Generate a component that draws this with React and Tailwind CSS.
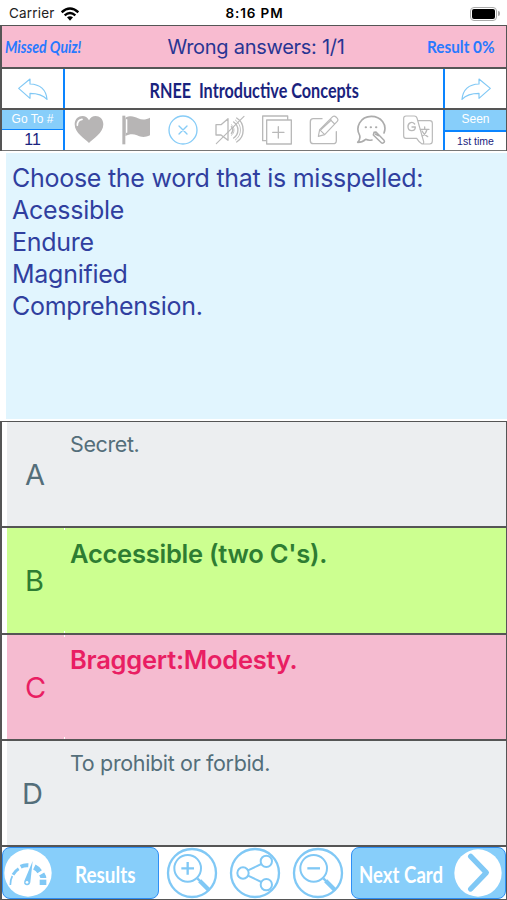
import React from 'react';

const answers = [
    { letter: 'A', text: 'Secret.', row: 'h-[106px] bg-[#eceef0] text-[#546e7a]', label: 'pl-[18px]', body: 'text-[21.5px] tracking-[-0.4px] pt-[7px]' },
    { letter: 'B', text: "Accessible (two C's).", row: 'h-[107px] bg-[#ccff90] text-[#2e7d32]', label: 'pl-[18px]', body: 'text-[25.5px] font-semibold tracking-[-0.25px] pt-[11px]', ticks: true },
    { letter: 'C', text: 'Braggert:Modesty.', row: 'h-[106px] bg-[#f5bbd0] text-[#e91e63]', label: 'pl-[18px]', body: 'text-[25.5px] font-semibold tracking-[-0.25px] pt-[10px]', ticks: true },
    { letter: 'D', text: 'To prohibit or forbid.', row: 'h-[106px] bg-[#eceef0] text-[#546e7a]', label: 'pl-[15px]', body: 'text-[21.5px] tracking-[-0.35px] pt-[7px]' },
];

const questionLines = [
    'Choose the word that is misspelled:',
    'Acessible',
    'Endure',
    'Magnified',
    'Comprehension.',
];

const ToolIcon = ({ children, color = '#b9b9b9' }) => (
    <svg viewBox="0 0 90 90" className="w-[30px] h-[30px]" fill="none" stroke={color} strokeWidth="4" strokeLinecap="round" strokeLinejoin="round">
        {children}
    </svg>
);

const ArrowIcon = ({ flip }) => (
    <svg viewBox="0 0 90 66" className={`w-[30px] h-[22px] ${flip ? '-scale-x-100' : ''}`} fill="none" stroke="#80c8f5" strokeWidth="3.5" strokeLinejoin="round">
        <path d="M2 31 36 3v15C64 19 84 34 87 64 73 49 58 46 36 46v15Z" />
    </svg>
);

const Toolbar = () => (
    <div className="flex-1 flex items-center justify-around pr-[1px]">
        <ToolIcon>
            <path d="M45 84C33 72 2 54 2 28 2 0 36-5 45 16 54-5 88 0 88 28 88 54 57 72 45 84Z" fill="#b7b5b5" stroke="none" />
            <path d="M10 31C10 20 16 14 24 13" stroke="#fff" strokeWidth="5" />
        </ToolIcon>
        <ToolIcon>
            <path d="M4 2H13V88H4Z" fill="#b7b5b5" stroke="none" />
            <path d="M13 8C28 0 40 4 51 10 64 16 76 14 87 8V61C70 69 60 66 48 61 36 56 26 57 13 63Z" fill="#b7b5b5" stroke="none" />
            <path d="M17 14V52" stroke="#fff" strokeWidth="4" />
        </ToolIcon>
        <ToolIcon color="#87ccf7">
            <circle cx="45" cy="45" r="42" />
            <path d="M33 33 57 57M57 33 33 57" />
        </ToolIcon>
        <ToolIcon>
            <path d="M3 29H18L39 11V76L18 60H3ZM49 35Q58 45 49 55M56 21C73 33 73 57 56 69M65 9C91 25 91 65 65 81" />
            <path d="M49 29C60 36 60 54 49 61M61 15C82 30 82 60 61 75" strokeWidth="2.5" />
            <path d="M4 86 87 4" strokeWidth="3.5" />
        </ToolIcon>
        <ToolIcon>
            <path d="M14 15H88V87H14ZM14 77H2V3H77V15M32 52H66M49 35V69" />
        </ToolIcon>
        <ToolIcon>
            <path d="M39 11H13Q4 11 4 20V77Q4 86 13 86H72Q82 86 82 77V50" />
            <path d="M28 64 32 44 71 5Q76 1 81 6L85 10Q89 15 84 20L47 59ZM32 44 47 59M63 13 77 27M37 43 67 15" strokeWidth="3.5" />
        </ToolIcon>
        <ToolIcon color="#acacac">
            <path d="M48 75Q37 77 29 73 19 82 5 82 14 73 11 61C-3 37 13 4 46 4 75 4 94 29 84 54" strokeWidth="5" />
            <path d="M54 52 60 51 84 76Q87 80 83 83 79 86 76 83L52 60ZM58 57 67 62" strokeWidth="4.5" />
            <path d="M29 37H30M44 37H45M60 37H61" strokeWidth="6" />
        </ToolIcon>
        <ToolIcon>
            <path d="M41 70H9Q2 70 2 63V10Q2 3 9 3H34Q40 3 42 9L62 80Q63 87 57 87 49 83 41 70ZM44 17H80Q88 17 88 25V78Q88 87 80 87H57" strokeWidth="3.5" />
            <path d="M35 27C26 17 14 25 15 36 16 51 37 50 37 36H27M52 43H78M65 36V43M72 43Q69 56 58 63M57 48Q63 60 74 65" strokeWidth="4" />
        </ToolIcon>
    </div>
);

const SideBox = ({ title, value, valueClass }) => (
    <div className="h-full flex flex-col text-center text-[#1a237e] font-['Liberation_Sans',sans-serif]">
        <div className="h-[20px] bg-[#87cefa] text-white text-[12px] leading-[19px]">{title}</div>
        <div className="h-[2px] bg-[#0a84ff]" />
        <div className={`flex-1 ${valueClass}`}>{value}</div>
    </div>
);

const ZoomIcon = ({ plus }) => (
    <svg viewBox="0 0 156 156" className="w-[52px] h-[52px]" fill="none" stroke="#80c8f5" strokeWidth="7">
        <circle cx="78" cy="78" r="72" />
        <circle cx="65" cy="64" r="40" strokeWidth="6" />
        <path d="M94 94 104 104" strokeWidth="7" />
        <path d="M101 101 128 128" strokeWidth="13" />
        <path d={plus ? 'M46 64H84M65 45V83' : 'M46 64H84'} />
    </svg>
);

const ShareIcon = () => (
    <svg viewBox="0 0 156 156" className="w-[52px] h-[52px]" fill="none" stroke="#80c8f5" strokeWidth="7">
        <circle cx="78" cy="78" r="72" />
        <circle cx="42" cy="78" r="17" strokeWidth="6" />
        <circle cx="112" cy="43" r="17" strokeWidth="6" />
        <circle cx="112" cy="113" r="17" strokeWidth="6" />
        <path d="M57 70 97 51M57 86 97 105" strokeWidth="6" />
    </svg>
);

const GaugeIcon = () => (
    <svg viewBox="0 0 144 144" className="w-[48px] h-[48px]">
        <circle cx="72" cy="72" r="71" fill="#fff" />
        <g fill="none" stroke="#80c8f5">
            <path d="M19 108Q19 92 25 81" strokeWidth="5" />
            <path d="M27 77Q34 65 44 59" strokeWidth="9" />
            <path d="M50 53Q60 48 73 49" strokeWidth="12" />
            <path d="M91 54Q101 59 107 68" strokeWidth="16" />
            <path d="M113 75Q118 83 118 87" strokeWidth="18" />
            <path d="M117 92V108" strokeWidth="20" />
        </g>
        <path d="M61 96 86 36 79 100Q77 110 68 109 58 107 61 96Z" fill="#80c8f5" />
        <circle cx="69" cy="100" r="4" fill="#fff" />
    </svg>
);

const NextIcon = () => (
    <svg viewBox="0 0 144 144" className="w-[48px] h-[48px]">
        <circle cx="72" cy="72" r="71" fill="#fff" />
        <path d="M50 22 97 71 50 120" fill="none" stroke="#80c8f5" strokeWidth="16" strokeLinecap="round" strokeLinejoin="round" />
    </svg>
);

const StatusBar = () => (
    <div className="h-[25px] flex items-center justify-between pl-[9px] pr-[7px] pt-[2px] text-[13.5px] text-[#222]">
        <div className="flex-1 flex items-center gap-[6px]">
            <span className="tracking-[0.2px]">Carrier</span>
            <svg viewBox="0 0 54 42" className="w-[18px] h-[14px]" fill="none" stroke="#000" strokeWidth="7">
                <path d="M2 16Q27-7 52 16M11 25Q27 11 43 25" />
                <path d="M18 31Q27 24 36 31L27 41Z" fill="#000" stroke="none" />
            </svg>
        </div>
        <span className="font-semibold text-black tracking-[0.9px]">8:16 PM</span>
        <div className="flex-1 flex justify-end items-center">
            <div className="w-[27px] h-[14px] rounded-[4px] border border-[#aaa] p-[1px]">
                <div className="h-full bg-black rounded-[2px]" />
            </div>
            <div className="w-[2px] h-[5px] bg-[#aaa] rounded-r-full ml-[1px]" />
        </div>
    </div>
);

export default function App() {
    return (
        <div className="w-[507px] h-[900px] bg-white flex flex-col overflow-hidden whitespace-nowrap font-['Inter',sans-serif]">
            <StatusBar />

            <header className="h-[126px] border-l-2 border-r border-[#555] flex flex-col">
                <div className="h-[44px] border-t border-b-2 border-[#555] bg-[#f8bbd0] flex items-center justify-between pl-[3px] pr-[12px] text-[#2979ff] font-['Lato',sans-serif]">
                    <span className="w-[80px] text-[17px] font-bold italic"><span className="inline-block origin-left scale-x-[0.83]">Missed Quiz!</span></span>
                    <span className="text-[20px] tracking-[-0.28px] text-[#283593] font-['Inter',sans-serif]">Wrong answers: 1/1</span>
                    <span className="w-[67px] text-[17px] font-bold"><span className="inline-block origin-left scale-x-[0.9]">Result 0%</span></span>
                </div>
                <div className="h-[41px] border-b-2 border-[#555] flex">
                    <div className="w-[63px] border-r-2 border-r-[#0a84ff] flex items-center justify-center"><ArrowIcon /></div>
                    <h1 className="flex-1 flex items-center justify-center pt-[2px] text-[20px] text-[#1a237e] font-bold font-['Lato',sans-serif]">
                        <span className="scale-x-[0.81] whitespace-pre">RNEE  Introductive Concepts</span>
                    </h1>
                    <div className="w-[63px] border-l-2 border-l-[#0a84ff] flex items-center justify-center"><ArrowIcon flip /></div>
                </div>
                <div className="h-[41px] border-b border-[#777] flex">
                    <div className="w-[63px] border-r-2 border-r-[#0a84ff]">
                        <SideBox title="Go To #" value="11" valueClass="text-[16px] leading-[20px]" />
                    </div>
                    <Toolbar />
                    <div className="w-[63px] border-l-2 border-l-[#0a84ff]">
                        <SideBox title="Seen" value="1st time" valueClass="text-[10.5px] font-medium leading-[18px]" />
                    </div>
                </div>
            </header>

            <section className="h-[270px] pl-[6px] pt-[2px] pb-[2px]">
                <div className="h-full bg-[#e1f5fe] pl-[6px] pt-[9px] text-[25px] tracking-[-0.27px] leading-[32px] text-[#303f9f]">
                    {questionLines.map((line) => (
                        <p key={line}>{line}</p>
                    ))}
                </div>
            </section>

            <main className="border-l-2 border-r border-t border-[#555]">
                {answers.map((answer) => (
                    <div key={answer.letter} className={`flex border-b-2 border-b-[#555] ${answer.row}`}>
                        <div className="w-[5px] bg-white" />
                        <div className={`w-[57px] flex items-center pt-[1px] text-[29px] ${answer.label}`}>{answer.letter}</div>
                        <div className="w-[1px] flex flex-col justify-between">
                            <div className={`h-[2px] ${answer.ticks ? 'bg-white' : ''}`} />
                            <div className={`h-[2px] ${answer.ticks ? 'bg-white' : ''}`} />
                        </div>
                        <p className={`pl-[5px] leading-[30px] ${answer.body}`}>{answer.text}</p>
                    </div>
                ))}
            </main>

            <footer className="h-[53px] border-l-2 border-r border-b border-[#555] flex text-white text-[23px] font-bold font-['Lato',sans-serif]">
                <button className="w-[157px] border border-[#2f8ff5] rounded-[8px] bg-[#87cefa] flex items-center pl-[1px]">
                    <GaugeIcon />
                    <span className="origin-left scale-x-[0.82] ml-[23px] pt-[2px]">Results</span>
                </button>
                <div className="flex-1 flex items-center justify-around px-[1px]">
                    <ZoomIcon plus />
                    <ShareIcon />
                    <ZoomIcon />
                </div>
                <button className="w-[155px] border border-[#2f8ff5] rounded-[8px] bg-[#87cefa] flex items-center pl-[7px]">
                    <span className="w-[95px] text-left pt-[2px]"><span className="inline-block origin-left scale-x-[0.81]">Next Card</span></span>
                    <NextIcon />
                </button>
            </footer>
        </div>
    );
}
